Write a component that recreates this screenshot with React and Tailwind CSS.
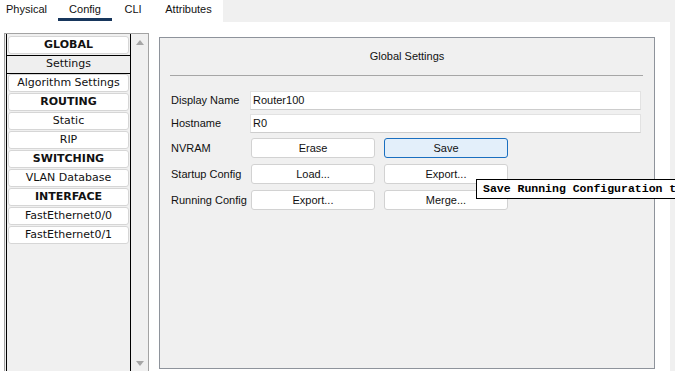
import React from 'react';

const tabs = [
  { name: 'Physical', cls: 'w-[58px] pl-[6px]' },
  { name: 'Config', cls: 'w-[54px] justify-center', active: true },
  { name: 'CLI', cls: 'w-[42px] justify-center' },
  { name: 'Attributes', cls: 'w-[69px] justify-center' },
];

const items = [
  { label: 'GLOBAL', head: true },
  { label: 'Settings', selected: true },
  { label: 'Algorithm Settings' },
  { label: 'ROUTING', head: true },
  { label: 'Static' },
  { label: 'RIP' },
  { label: 'SWITCHING', head: true },
  { label: 'VLAN Database' },
  { label: 'INTERFACE', head: true },
  { label: 'FastEthernet0/0' },
  { label: 'FastEthernet0/1' },
];

const Btn = ({ children, active }) => (
  <div
    className={`w-[124px] h-[20px] shrink-0 flex items-center justify-center rounded-[3px] border ${
      active ? 'bg-[#e3effa] border-[#1a6fc0]' : 'bg-white border-[#d2d2d2]'
    }`}
  >
    {children}
  </div>
);

const Field = ({ label, value, first }) => (
  <div className={`flex items-center h-[19px] ${first ? 'mt-[15px]' : 'mt-[4px]'}`}>
    <div className="w-[90px] shrink-0 whitespace-nowrap pl-[11px]">{label}</div>
    <div className="w-[391px] shrink-0 h-[19px] bg-white border border-[#e2e2e2] border-b-[#cdcdcd] flex items-center pl-[2px]">
      {value}
    </div>
  </div>
);

const ButtonRow = ({ label, left, right, active, top }) => (
  <div className={`flex items-center h-[20px] ${top}`}>
    <div className="w-[91px] shrink-0 whitespace-nowrap pl-[11px]">{label}</div>
    <div className="flex gap-[9px]">
      <Btn>{left}</Btn>
      <Btn active={active}>{right}</Btn>
    </div>
  </div>
);

export default function App() {
  return (
    <div
      className="relative w-[675px] h-[371px] overflow-hidden bg-[#f0f0f0] text-[11px] text-[#111]"
      style={{ fontFamily: '"Liberation Sans", Arial, sans-serif' }}
    >
      {/* tab strip */}
      <div className="flex h-[22px]">
        <div className="flex w-[223px] bg-white">
          {tabs.map((t) => (
            <div
              key={t.name}
              className={`flex items-center h-[21px] pt-[1px] border-b-[3px] ${t.cls} ${
                t.active ? 'border-[#17365c]' : 'border-transparent'
              }`}
            >
              {t.name}
            </div>
          ))}
        </div>
        <div className="flex-1" />
      </div>

      <div className="flex h-[349px]">
        <div className="w-[670px] bg-white flex pl-[4px] pt-[11px]">
          {/* sidebar */}
          <div className="w-[145px] h-[338px] shrink-0 flex bg-[#f0f0f0] border-l border-t border-r border-[#a3a3a3]">
            <div
              className="ml-[1px] w-[125px] h-full border-x border-black pt-[2px] flex flex-col"
              style={{ fontFamily: '"DejaVu Sans", Verdana, sans-serif' }}
            >
              {items.map((it) =>
                it.selected ? (
                  <div
                    key={it.label}
                    className="h-[19px] border-y border-black bg-[#efefef] flex items-center justify-center"
                  >
                    {it.label}
                  </div>
                ) : (
                  <div
                    key={it.label}
                    className={`mx-[1px] mb-[1px] h-[18px] bg-white border border-[#d6d6d6] rounded-[3px] flex items-center justify-center ${
                      it.head ? 'font-bold' : ''
                    }`}
                  >
                    {it.label}
                  </div>
                )
              )}
            </div>
            <div className="w-[17px] flex flex-col items-center justify-between pt-[6px] pb-[5px]">
              <svg width="8" height="5" viewBox="0 0 8 5">
                <path d="M0 5 L4 0 L8 5 Z" fill="#a6a6a6" />
              </svg>
              <svg width="8" height="5" viewBox="0 0 8 5">
                <path d="M0 0 L8 0 L4 5 Z" fill="#a6a6a6" />
              </svg>
            </div>
          </div>

          {/* main panel */}
          <div className="ml-[10px] mt-[4px] w-[496px] h-[332px] shrink-0 border border-[#8e939b] bg-[#f0f0f0] flex flex-col">
            <div className="h-[37px] flex items-center justify-center">Global Settings</div>
            <div className="h-px bg-[#a6a6a6] ml-[10px] mr-[11px]" />
            <Field label="Display Name" value="Router100" first />
            <Field label="Hostname" value="R0" />
            <ButtonRow label="NVRAM" left="Erase" right="Save" active top="mt-[5px]" />
            <ButtonRow label="Startup Config" left="Load..." right="Export..." top="mt-[6px]" />
            <ButtonRow label="Running Config" left="Export..." right="Merge..." top="mt-[6px]" />
          </div>
        </div>
        <div className="w-[5px]" />
      </div>

      {/* tooltip */}
      <div
        className="absolute left-[476px] top-[179px] h-[20px] pl-[6px] pr-[10px] flex items-center bg-white border border-black whitespace-nowrap font-bold text-[11.5px] text-black"
        style={{ fontFamily: '"Liberation Mono", "Courier New", monospace' }}
      >
        Save Running Configuration to Startup Configuration
      </div>
    </div>
  );
}
